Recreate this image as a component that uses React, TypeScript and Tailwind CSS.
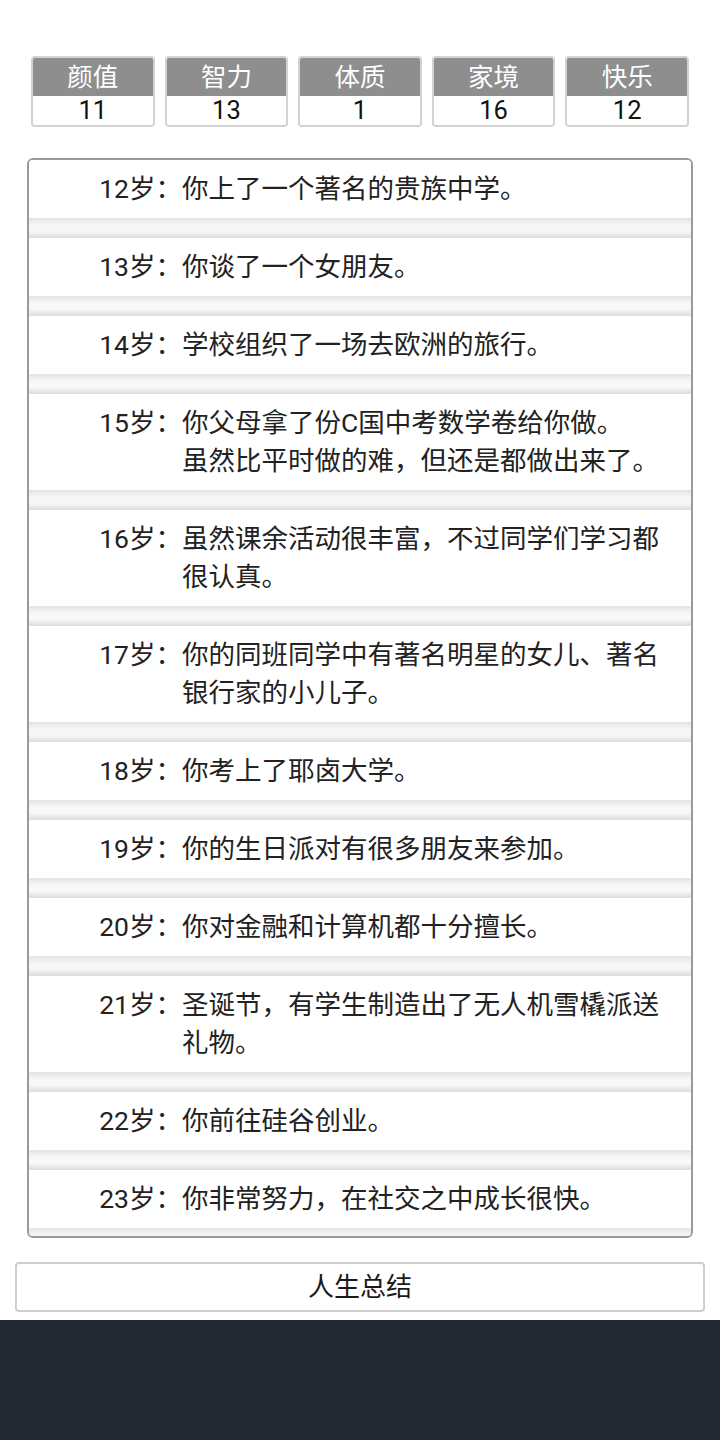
import React from "react";

const stats = [
  { label: "颜值", value: 11 },
  { label: "智力", value: 13 },
  { label: "体质", value: 1 },
  { label: "家境", value: 16 },
  { label: "快乐", value: 12 },
];

const events: { age: number; text: string }[] = [
  { age: 12, text: "你上了一个著名的贵族中学。" },
  { age: 13, text: "你谈了一个女朋友。" },
  { age: 14, text: "学校组织了一场去欧洲的旅行。" },
  { age: 15, text: "你父母拿了份C国中考数学卷给你做。\n虽然比平时做的难，但还是都做出来了。" },
  { age: 16, text: "虽然课余活动很丰富，不过同学们学习都很认真。" },
  { age: 17, text: "你的同班同学中有著名明星的女儿、著名银行家的小儿子。" },
  { age: 18, text: "你考上了耶卤大学。" },
  { age: 19, text: "你的生日派对有很多朋友来参加。" },
  { age: 20, text: "你对金融和计算机都十分擅长。" },
  { age: 21, text: "圣诞节，有学生制造出了无人机雪橇派送礼物。" },
  { age: 22, text: "你前往硅谷创业。" },
  { age: 23, text: "你非常努力，在社交之中成长很快。" },
];

export default function App() {
  return (
    <div
      className="flex min-h-[1440px] flex-col bg-white text-[#222]"
      style={{ fontFamily: 'Roboto, "Noto Sans CJK SC", "Noto Sans", sans-serif' }}
    >
      <div className="grid grid-cols-5 gap-[10px] px-[31px] pt-[56px]">
        {stats.map((s) => (
          <div
            key={s.label}
            className="flex flex-col overflow-hidden rounded-[4px] border-2 border-[#d2d2d2]"
          >
            <div className="h-[38px] bg-[#8e8e8e] text-center text-[25.5px] leading-[38px] text-white">
              {s.label}
            </div>
            <div className="h-[29px] bg-white text-center text-[25.5px] leading-[29px] text-[#111]">
              {s.value}
            </div>
          </div>
        ))}
      </div>

      <div className="mx-[27px] mt-[31px] h-[1080px] overflow-hidden rounded-[6px] border-2 border-[#9a9a9a]">
        {events.map((e) => (
          <div key={e.age}>
            <div className="flex bg-white py-[10px] pr-4 text-[26.5px] leading-[38px] text-[#222]">
              <div className="w-[153px] shrink-0 text-right">{e.age}岁：</div>
              <div className="min-w-0 flex-1 whitespace-pre-line">{e.text}</div>
            </div>
            <div className="h-[20px] bg-[linear-gradient(to_bottom,#e3e3e3,#f6f6f6_35%,#f8f8f8_65%,#dcdcdc)]" />
          </div>
        ))}
      </div>

      <div className="mx-[15px] mt-[24px] flex h-[50px] items-center justify-center rounded-[4px] border-2 border-[#cfcfcf] bg-white text-[26px] text-[#1a1a1a]">
        人生总结
      </div>

      <div className="mt-[8px] flex-1 bg-[#222831]" />
    </div>
  );
}
